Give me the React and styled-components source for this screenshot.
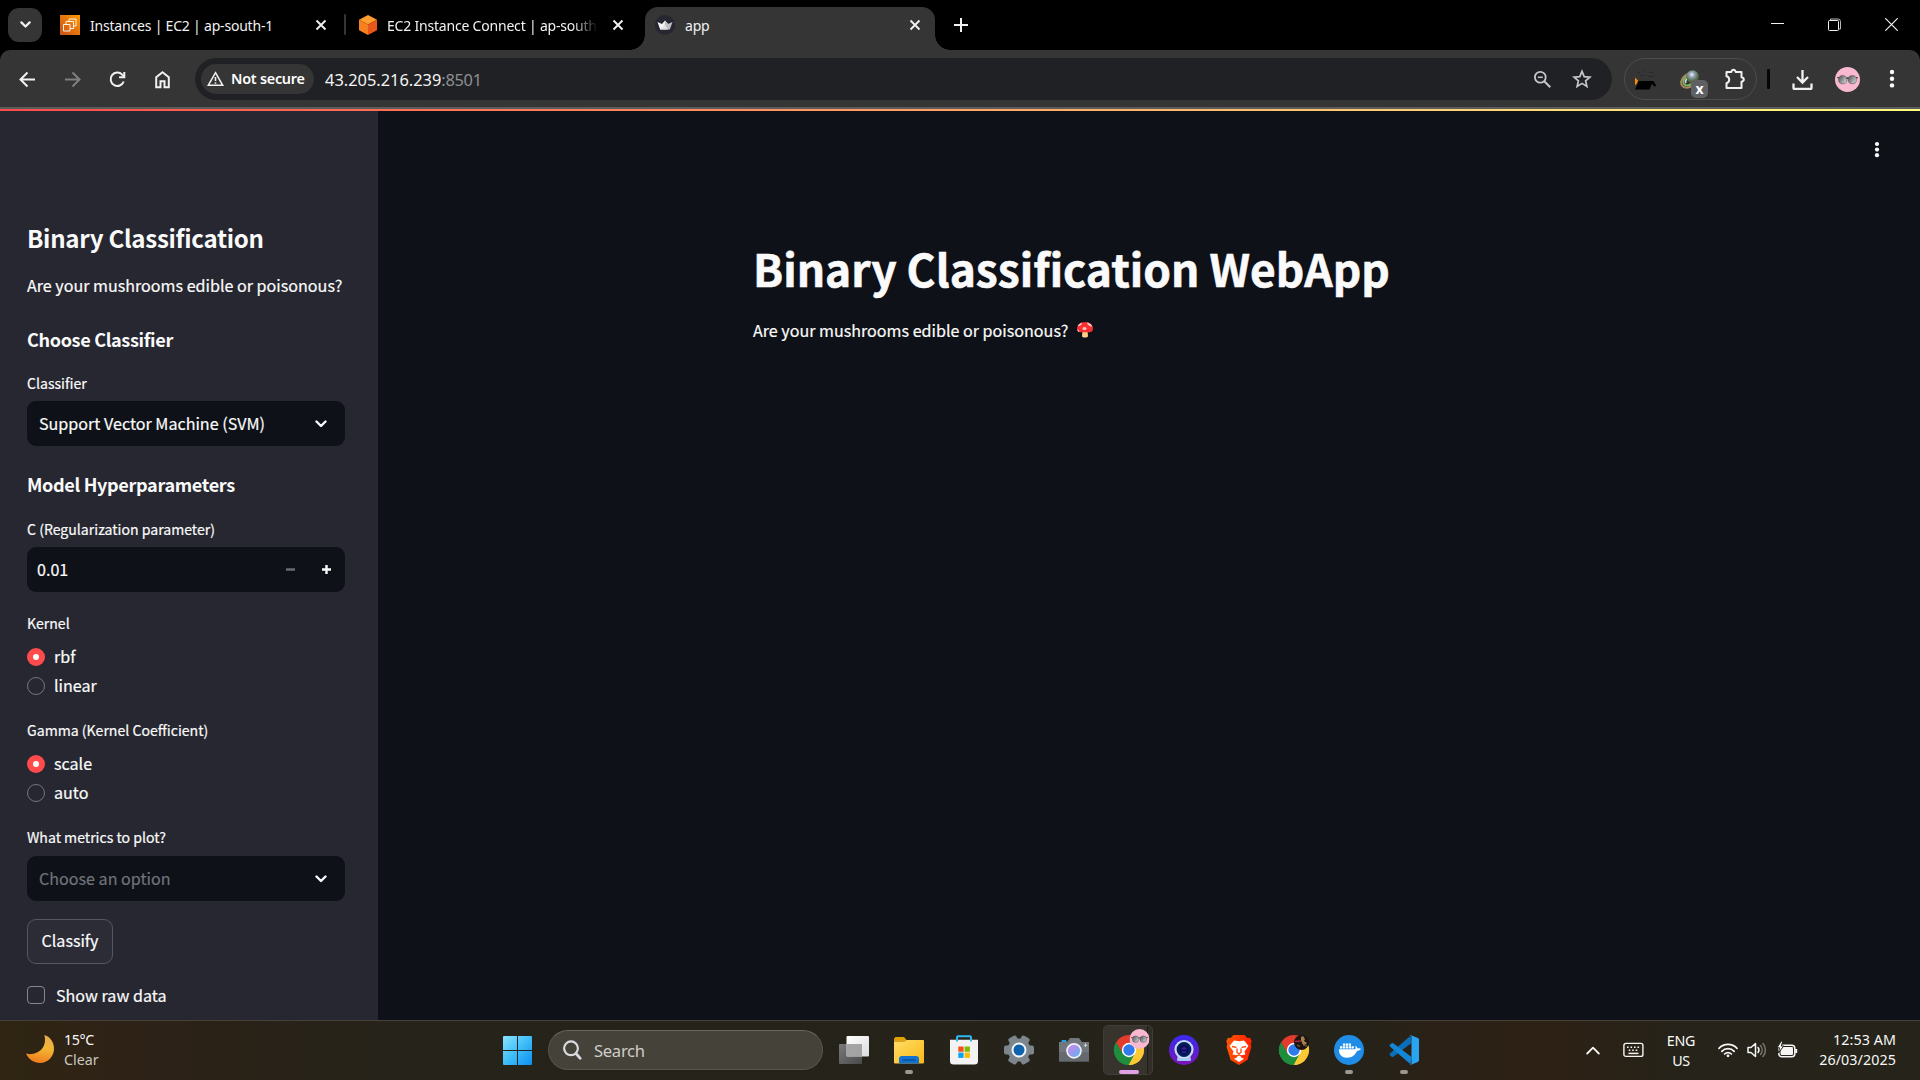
import React from "react";
import styled, { createGlobalStyle, css } from "styled-components";

const SOURCE = '"Noto Sans CJK SC", "Noto Sans", sans-serif';
const SEGOE = '"Noto Sans", "Open Sans", sans-serif';

const GlobalStyle = createGlobalStyle`
  *, *::before, *::after { box-sizing: border-box; }
  body { margin: 0; background: #000; overflow: hidden; }
  svg { display: block; flex: none; }
  h1, h2, h3, p { margin: 0; }
  button { font: inherit; color: inherit; border: 0; background: none; padding: 0; margin: 0; }
`;

const Screen = styled.div`
  width: 1920px;
  height: 1080px;
  display: flex;
  flex-direction: column;
  overflow: hidden;
  background: #000;
  color: #fafafa;
`;

/* ---------- browser chrome ---------- */

const TabStrip = styled.header`
  height: 50px;
  flex: none;
  display: flex;
  align-items: flex-start;
  background: #000;
  font-family: ${SEGOE};
`;

const TabSearch = styled.button`
  width: 34px;
  height: 34px;
  margin: 8px 0 0 8px;
  border-radius: 11px;
  background: #353535;
  display: grid;
  place-items: center;
`;

const Tab = styled.div`
  position: relative;
  display: flex;
  align-items: center;
  width: ${(p) => p.$w}px;
  height: 43px;
  margin-top: 7px;
  margin-left: ${(p) => p.$gap || 0}px;
  padding: 0 ${(p) => p.$pr || 0}px 7px ${(p) => p.$pl || 0}px;
  font-size: 14px;
  letter-spacing: -0.2px;
  color: #f1f1f1;
  ${(p) =>
    p.$active &&
    css`
      background: #353535;
      border-radius: 13px 13px 0 0;
      &::before, &::after {
        content: "";
        position: absolute;
        bottom: 0;
        width: 15px;
        height: 15px;
      }
      &::before {
        left: -15px;
        background: radial-gradient(circle at 0 0, transparent 14.5px, #353535 15px);
      }
      &::after {
        right: -15px;
        background: radial-gradient(circle at 100% 0, transparent 14.5px, #353535 15px);
      }
    `}
`;

const TabTitle = styled.span`
  flex: 1;
  min-width: 0;
  margin-left: 10px;
  overflow: hidden;
  white-space: nowrap;
  line-height: 20px;
  padding-top: 1px;
  ${(p) => p.$fade && "mask-image: linear-gradient(90deg, #000 185px, transparent 211px);"}
`;

const TabDivider = styled.i`
  width: 2px;
  height: 21px;
  margin: 14px 0 0 17px;
  background: #353535;
  border-radius: 1px;
`;

const NewTab = styled.button`
  margin: 18px 0 0 19px;
`;

const WindowControls = styled.div`
  margin-left: auto;
  display: flex;
  gap: 44px;
  padding: 18px 22px 0 0;
`;

const ToolbarBack = styled.div`
  height: 59px;
  flex: none;
  background: #000;
`;

const Toolbar = styled.nav`
  height: 59px;
  display: flex;
  align-items: center;
  padding: 1px 0 0;
  background: #353535;
  border-radius: 10px 10px 0 0;
  border-bottom: 2px solid #5c5c5c;
  font-family: ${SEGOE};
`;

const NavIcons = styled.div`
  display: flex;
  align-items: center;
  gap: 24px;
  padding-left: 17px;
  width: 195px;
`;

const Omnibox = styled.div`
  width: 1417px;
  height: 42px;
  border-radius: 21px;
  background: #202124;
  display: flex;
  align-items: center;
  padding: 0 20px 0 6px;
`;

const SecurityChip = styled.span`
  width: 113px;
  height: 30px;
  border-radius: 15px;
  background: #353535;
  display: flex;
  align-items: center;
  gap: 7px;
  padding: 0 0 1px 6px;
  font-size: 14.4px;
  font-weight: 600;
  letter-spacing: -0.25px;
  color: #fff;
  white-space: nowrap;
`;

const Url = styled.span`
  margin-left: 11px;
  flex: 1;
  font-size: 16.4px;
  letter-spacing: 0;
  color: #f4f4f4;
`;

const Port = styled.span`
  color: #8d9095;
  letter-spacing: -0.3px;
`;

const OmniActions = styled.div`
  display: flex;
  align-items: center;
  gap: 20px;
`;

const Extensions = styled.div`
  width: 133px;
  height: 42px;
  margin-left: 12px;
  border: 1px solid #4c4c4c;
  border-radius: 21px;
  display: flex;
  align-items: center;
  padding: 0 9px 0 10px;
`;

const GlobeSlot = styled.div`
  margin: 10px 16px 0 24px;
`;

const ToolDivider = styled.i`
  width: 3px;
  height: 20px;
  margin: 0 22px 0 10px;
  border-radius: 1px;
  background: #050505;
`;

const ToolEnd = styled.div`
  display: flex;
  align-items: center;
`;

const AvatarSlot = styled.div`
  margin: 0 29px 0 22px;
`;

/* ---------- web page ---------- */

const GradientBar = styled.div`
  height: 2px;
  flex: none;
  background: linear-gradient(90deg, #ff4b4b, #fffd80);
`;

const Page = styled.div`
  height: 909px;
  flex: none;
  display: flex;
  background: #0e1117;
  font-family: ${SOURCE};
  font-size: 16.1px;
  line-height: 24px;
  -webkit-text-stroke: 0.2px currentColor;
`;

const Sidebar = styled.aside`
  width: 378px;
  flex: none;
  background: #262730;
  padding: 111px 33px 0 27px;
`;

const SideTitle = styled.h2`
  font-size: 24.1px;
  font-weight: 600;
  letter-spacing: -0.29px;
  line-height: 32px;
  white-space: nowrap;
  -webkit-text-stroke: 0;
`;

const SideText = styled.p`
  margin-top: 19px;
  white-space: nowrap;
`;

const SubHead = styled.h3`
  margin-top: ${(p) => p.$mt}px;
  font-size: 18.1px;
  font-weight: 600;
  letter-spacing: -0.35px;
  line-height: 26px;
  -webkit-text-stroke: 0;
`;

const Label = styled.div`
  margin-top: ${(p) => p.$mt}px;
  font-size: 14.1px;
  line-height: 20px;
`;

const Field = styled.div`
  height: 45px;
  margin-top: ${(p) => p.$mt}px;
  padding: 0 ${(p) => p.$pr}px 0 ${(p) => p.$pl}px;
  display: flex;
  align-items: center;
  border-radius: 9px;
  background: #0e1117;
  color: ${(p) => (p.$muted ? "#71737a" : "#fafafa")};
`;

const FieldText = styled.span`
  flex: 1;
  padding-bottom: 2px;
`;

const FieldArrow = styled.span`
  padding-top: 1px;
`;

const Stepper = styled.button`
  width: 36px;
  height: 45px;
  display: grid;
  place-items: center;
  color: ${(p) => (p.$off ? "#6d6e7a" : "#fafafa")};
`;

const Radios = styled.div`
  margin-top: ${(p) => p.$mt}px;
  display: flex;
  flex-direction: column;
  gap: 11px;
`;

const Option = styled.label`
  height: 18px;
  margin-top: ${(p) => p.$mt || 0}px;
  display: flex;
  align-items: center;
  gap: ${(p) => p.$gap}px;
`;

const OptionText = styled.span`
  padding-bottom: ${(p) => p.$lift || 0}px;
`;

const RadioDot = styled.i`
  width: 18px;
  height: 18px;
  border-radius: 50%;
  display: grid;
  place-items: center;
  ${(p) =>
    p.$on
      ? css`
          background: #ff4b4b;
          &::after {
            content: "";
            width: 6px;
            height: 6px;
            border-radius: 50%;
            background: #fafafa;
          }
        `
      : css`
          border: 1px solid #74757c;
        `}
`;

const CheckSquare = styled.i`
  width: 18px;
  height: 18px;
  border: 1px solid #85868c;
  border-radius: 4px;
`;

const ClassifyButton = styled.button`
  display: block;
  width: 86px;
  height: 45px;
  margin-top: 18px;
  padding-bottom: 3px;
  border: 1px solid #55565f;
  border-radius: 9px;
  background: #2b2c36;
`;

const Main = styled.main`
  flex: 1;
  display: flex;
  flex-direction: column;
`;

const MainHeader = styled.div`
  height: 77px;
  display: flex;
  justify-content: flex-end;
  align-items: center;
  padding: 0 40px 0 0;
`;

const Content = styled.section`
  padding: 51px 0 0 375px;
`;

const PageTitle = styled.h1`
  font-size: 44.3px;
  font-weight: 700;
  line-height: 58px;
  white-space: nowrap;
  -webkit-text-stroke: 0.6px currentColor;
`;

const PageText = styled.p`
  margin-top: 21px;
  display: flex;
  align-items: center;
  gap: 9px;
`;

/* ---------- taskbar ---------- */

const Taskbar = styled.footer`
  height: 60px;
  flex: none;
  display: flex;
  align-items: stretch;
  border-top: 1px solid #45413a;
  background: linear-gradient(90deg, #2f2512 0, #2e2217 130px, #2b2217 200px, #25231a 420px, #242219 1350px, #2c2116 1440px, #2d2115 1560px, #25231a 1690px, #25231a 1920px);
  font-family: ${SEGOE};
  font-size: 14.3px;
  line-height: 20px;
  color: #f8f8f6;
`;

const Weather = styled.div`
  width: 503px;
  display: flex;
  align-items: flex-start;
  gap: 10px;
  padding: 9px 0 0 26px;
  svg { margin-top: 5px; }
`;

const Stack = styled.div`
  display: flex;
  flex-direction: column;
  align-items: ${(p) => p.$align || "flex-start"};
  letter-spacing: ${(p) => p.$ls || 0}px;
  white-space: nowrap;
`;

const Dim = styled.span`
  color: #c9c6c0;
  letter-spacing: 0;
`;

const SearchBox = styled.div`
  width: 275px;
  height: 40px;
  margin: 9px 3px 0 16px;
  border: 1px solid #57544c;
  border-top-color: #6b6860;
  border-radius: 20px;
  background: #45423a;
  display: flex;
  align-items: center;
  gap: 12px;
  padding-left: 14px;
  font-size: 16.6px;
  letter-spacing: -0.3px;
  color: #cfcdc8;
`;

const SearchText = styled.span`
  padding-top: 2px;
`;

const StartIcon = styled.div`
  padding-top: 15px;
`;

const AppSlot = styled.div`
  position: relative;
  width: 55px;
  display: grid;
  place-items: center;
  padding-bottom: 1px;
  ${(p) =>
    p.$mark &&
    css`
      &::after {
        content: "";
        position: absolute;
        left: calc(50% - ${p.$mark / 2}px);
        bottom: 6px;
        width: ${p.$mark}px;
        height: 4px;
        border-radius: 2px;
        background: ${p.$markColor || "#9a9893"};
      }
    `}
`;

const ActiveTile = styled.i`
  position: absolute;
  left: 2px;
  top: 4px;
  width: 50px;
  height: 50px;
  border: 1px solid #403d36;
  border-radius: 5px;
  background: linear-gradient(90deg, #37342d 43px, #1f1d17 43px, #1f1d17 44px, #302e26 44px);
`;

const SlotIcon = styled.div`
  position: relative;
`;

const Tray = styled.div`
  margin-left: auto;
  display: flex;
  align-items: flex-start;
  padding-right: 24px;
`;

const TrayIcon = styled.div`
  height: 58px;
  display: flex;
  align-items: center;
  margin-right: ${(p) => p.$mr}px;
`;

const TrayText = styled.div`
  padding-top: ${(p) => p.$pt}px;
  margin-right: ${(p) => p.$mr || 0}px;
`;

/* ---------- icons ---------- */

const stroke = { fill: "none", stroke: "currentColor", strokeLinecap: "round", strokeLinejoin: "round" };

const Svg = ({ w, h = w, vb, children, ...rest }) => (
  <svg width={w} height={h} viewBox={vb || `0 0 ${w} ${h}`} {...rest}>{children}</svg>
);

const CloseIcon = () => (
  <Svg w={12} stroke="#f1f1f1" strokeWidth="1.9"><path d="M1.5 1.5l9 9M10.5 1.5l-9 9" /></Svg>
);

const Chevron = ({ w = 12, sw = 2.4, color = "#fafafa" }) => (
  <Svg w={w} h={w * 0.67} vb="0 0 12 8" {...stroke} stroke={color} strokeWidth={sw}><path d="M1.5 1.5L6 6l4.5-4.5" /></Svg>
);

const EC2Icon = () => (
  <Svg w={20}>
    <defs><linearGradient id="ec2" x1="0" y1="1" x2="1" y2="0"><stop stopColor="#c8511b" /><stop offset="1" stopColor="#ff9900" /></linearGradient></defs>
    <path fill="url(#ec2)" d="M0 0h20v20H0z" />
    <g fill="none" stroke="#fff" strokeWidth="1" opacity=".9">
      <path d="M3.500 9.500h6.500v6.500H3.500z" />
      <path d="M6 9.500V6.500h7.500v7H10M9 6.500V4h7v7h-2.500" />
    </g>
  </Svg>
);

const HexIcon = () => (
  <Svg w={18} h={20}>
    <path fill="#ff9d2e" d="M9 0l9 4.800-9 4.700-9-4.700z" />
    <path fill="#f78020" d="M0 4.800l9 4.700V20l-9-4.800z" />
    <path fill="#e8561a" d="M18 4.800L9 9.500V20l9-4.800z" />
  </Svg>
);

const CrownIcon = () => (
  <Svg w={20}>
    <circle cx="10" cy="10" r="10" fill="#262730" />
    <path fill="#f5f5f5" d="M2.500 7l4.500 2 3-3.500L13 9l-2 5.500H5.200z" />
    <path fill="#bfbfc2" d="M10 5.500L13 9l4.500-2-2.700 7.500H9.500z" />
    <path fill="#e2e2e4" d="M5.200 14.500L10 9.500l3 5z" />
  </Svg>
);

const NavArrow = ({ flip, color }) => (
  <Svg w={21} stroke={color} strokeWidth="2" fill="none">
    <path d={flip ? "M3 10.500h14M10.500 3.500l7 7-7 7" : "M18 10.500H4M10.500 3.500l-7 7 7 7"} />
  </Svg>
);

const ReloadIcon = () => (
  <Svg w={21} stroke="#f1f1f1" strokeWidth="2" fill="none">
    <path d="M16.700 12.500a6.700 6.700 0 1 1-1.500-6.900l1.800 1.900" /><path d="M17.300 3v5.200h-5.200" />
  </Svg>
);

const HomeIcon = () => (
  <Svg w={21} stroke="#f1f1f1" strokeWidth="2" fill="none">
    <path d="M4.200 8.200v10h4.300v-6h4v6h4.300v-10L10.500 3.200z" />
  </Svg>
);

const WarningIcon = () => (
  <Svg w={17} h={16} stroke="#f1f1f1" fill="none">
    <path strokeWidth="1.500" d="M8.500 1.700L15.700 14.300H1.300z" /><path strokeWidth="1.600" d="M8.500 6v4M8.500 11.200v1.600" />
  </Svg>
);

const ZoomOutIcon = () => (
  <Svg w={19} stroke="#c4c6c9" fill="none">
    <circle cx="7.300" cy="7.300" r="5.400" strokeWidth="1.800" /><path strokeWidth="2" d="M11.300 11.300l6 6" /><path strokeWidth="1.500" d="M4.800 7.300h5" />
  </Svg>
);

const StarIcon = () => (
  <Svg w={20} stroke="#c4c6c9" strokeWidth="1.700" fill="none">
    <path d="M10 2.300l2.200 5.300 5.700.5-4.300 3.700 1.300 5.600L10 14.400l-4.900 3 1.300-5.600L2.100 8.100l5.700-.5z" />
  </Svg>
);

const DarkExtension = () => (
  <Svg w={21} h={22}>
    <g fill="#2a2a2a"><path d="M2 4h3v1H2zM8 2h2v1H8zM14 4h4v1h-4zM5 7h5v1H5zM13 8h6v1h-6z" /></g>
    <path fill="#000" d="M4 13h14.500l3 5-2.500.5-2-3-2.500 6L0 21.500z" />
    <path fill="#ff8c00" d="M0 9.500l3 3-1.500 3.500L0 17z" />
  </Svg>
);

const GlobeExtension = () => (
  <Svg w={28} h={28}>
    <defs><radialGradient id="globe" cx=".45" cy=".35"><stop stopColor="#eef3f7" /><stop offset=".45" stopColor="#8f9fb0" /><stop offset="1" stopColor="#536b45" /></radialGradient></defs>
    <path d="M10 3C2 6 0 12 2 15.500c2 3 7 2.500 9.500.5" fill="none" stroke="#a58b62" strokeWidth="2" />
    <path d="M8 6c-4.500 2-5.500 6-4 8s5 2 8-.5" fill="none" stroke="#7fb35c" strokeWidth="2" />
    <path d="M8 8c-2.500 2-3 3.500-2 5" fill="none" stroke="#d5e3ef" strokeWidth="1.500" />
    <circle cx="12.500" cy="6.500" r="6.300" fill="url(#globe)" />
    <rect x="11" y="10" width="17" height="18" rx="5" fill="#5f6063" />
    <text x="19.500" y="24" textAnchor="middle" fontFamily="Noto Sans" fontWeight="700" fontSize="14" fill="#fff">x</text>
  </Svg>
);

const PuzzleIcon = () => (
  <Svg w={22} stroke="#f1f1f1" strokeWidth="2" fill="none" strokeLinejoin="round">
    <path d="M2.500 4h4.800c.4-1.500 1-2.200 2.200-2.200S11.300 2.500 11.700 4h5.800v5.300c1.500.3 2.300 1 2.300 2.200s-.8 1.900-2.300 2.200V20h-15v-4.800c1.700-.5 2.700-1.700 2.700-3.500s-1-3-2.700-3.400z" />
  </Svg>
);

const DownloadIcon = () => (
  <Svg w={21} stroke="#f1f1f1" strokeWidth="2.300" fill="none">
    <path d="M10.500 1v12M5 8l5.500 5.500L16 8" /><path strokeLinejoin="round" d="M1.500 14.500V19a1.200 1.200 0 0 0 1.200 1h15.600a1.200 1.200 0 0 0 1.200-1v-4.500" />
  </Svg>
);

const Avatar = ({ w }) => (
  <Svg w={w} vb="0 0 25 25">
    <defs><linearGradient id="lens" x2="1" y2=".6"><stop stopColor="#4a4c4f" /><stop offset="1" stopColor="#c6cbcf" /></linearGradient></defs>
    <circle cx="12.500" cy="12.500" r="12.500" fill="#f8b8d0" />
    <g fill="url(#lens)" stroke="#5a5053" strokeWidth=".6"><circle cx="7.700" cy="12.700" r="4.100" /><circle cx="17.300" cy="12.700" r="4.100" /></g>
    <path d="M2.300 10.700h1.500M11.500 11.500q1-1 2 0M21.200 10.700h1.500" stroke="#333" strokeWidth="1.200" fill="none" />
  </Svg>
);

const Dots = ({ r, gap }) => (
  <Svg w={6} h={gap * 2 + 6} fill="#fafafa">
    <circle cx="3" cy="3" r={r} /><circle cx="3" cy={3 + gap} r={r} /><circle cx="3" cy={3 + gap * 2} r={r} />
  </Svg>
);

const Mushroom = () => (
  <Svg w={16} h={16} vb="0 0 16 19.500" preserveAspectRatio="none">
    <path fill="#ffcf85" d="M5.500 11h5l.5 6c0 2.700-6 2.700-6 0z" />
    <path fill="#f92f32" d="M8 0c5 0 8 4 8 8 0 3.500-2 4.500-3.500 4.500h-9C2 12.500 0 11.500 0 8c0-4 3-8 8-8z" />
    <g fill="#fbc5bd"><circle cx="7.500" cy="8" r="2" /><path d="M10 .5c2.500.5 4.500 2.300 5.300 5-2.300.3-5.300-2.200-5.300-5zM5 .8C3 1.500 1.400 3 .7 5 3 5 5.200 3 5 .8zM.2 9c1.500.3 2.500 1.700 2 3.200C1 11.700.2 10.500.2 9z" /></g>
  </Svg>
);

const Moon = () => (
  <Svg w={28}>
    <defs><linearGradient id="moon" x1=".6" x2=".4" y2="1"><stop stopColor="#e6ac4e" /><stop offset=".45" stopColor="#f2b632" /><stop offset="1" stopColor="#ef7a1d" /></linearGradient></defs>
    <path fill="url(#moon)" d="M18.300 0C24 1.500 28 7 28 13.500 28 21.500 22 28 14 28 8 28 2.500 24.500 0 18.300c2 .8 4 1 6 .7 7-1 13-6 13-14 0-1.800-.2-3.500-.7-5z" />
  </Svg>
);

const WindowsLogo = () => (
  <Svg w={29}>
    <defs><linearGradient id="win" x2="1" y2="1"><stop stopColor="#8ae4fd" /><stop offset=".5" stopColor="#3fbdf9" /><stop offset="1" stopColor="#0c8ff0" /></linearGradient></defs>
    <path fill="url(#win)" d="M1 0h13v14H0V1a1 1 0 0 1 1-1zM15 0h13a1 1 0 0 1 1 1v13H15zM0 15h14v14H1a1 1 0 0 1-1-1zM15 15h14v13a1 1 0 0 1-1 1H15z" />
  </Svg>
);

const SearchIcon = () => (
  <Svg w={19} h={20} stroke="#d9dadf" fill="none"><circle cx="8" cy="8.300" r="6.900" strokeWidth="2.200" /><path d="M13 13.500l4.200 4.800" strokeWidth="2.800" strokeLinecap="round" /></Svg>
);

const TaskView = () => (
  <Svg w={30}>
    <defs><linearGradient id="tvw" x2="1" y2="1"><stop stopColor="#fff" /><stop offset="1" stopColor="#dcdcdc" /></linearGradient><linearGradient id="tvd" x2="1" y2="1"><stop stopColor="#7a7a7a" /><stop offset="1" stopColor="#4a4a4a" /></linearGradient></defs>
    <rect y="9" width="23" height="20" rx="1" fill="url(#tvd)" /><rect x="7.500" y="1" width="22.500" height="20.500" rx="1" fill="url(#tvw)" /><path d="M7.500 9H23v12.500H7.500z" fill="#9b9b9b" opacity=".9" />
  </Svg>
);

const Folder = () => (
  <Svg w={30}>
    <defs><linearGradient id="fld" x2="1" y2="1"><stop stopColor="#ffdd66" /><stop offset="1" stopColor="#fbb917" /></linearGradient></defs>
    <path fill="#e0a100" d="M1.500 2h8.500l3 3.500V9H0V3.500z" /><rect y="5" width="30" height="23.500" rx="1" fill="url(#fld)" /><path fill="#dea31a" d="M0 5h13l-2.500 2H0z" />
    <path fill="#1173cf" d="M5 28.500V24a3 3 0 0 1 3-3h14a3 3 0 0 1 3 3v4.500z" /><path d="M8.500 25h13" stroke="#0a4f9b" strokeWidth="1.500" />
  </Svg>
);

const Store = () => (
  <Svg w={30}>
    <path d="M8 6V2.200a1 1 0 0 1 1-1h12a1 1 0 0 1 1 1V6" fill="none" stroke="#2eb8ef" strokeWidth="2" />
    <path fill="#f3f3f3" d="M1 4.700h28V26a3.500 3.500 0 0 1-3.500 3.500h-21A3.500 3.500 0 0 1 1 26z" /><path d="M8 4v2.500M22 4v2.500" stroke="#2eb8ef" strokeWidth="2" />
    <path fill="#f1511b" d="M9.300 11.500h5.300v5.300H9.300z" /><path fill="#80bb03" d="M15.600 11.500h5.300v5.300h-5.300z" /><path fill="#06a4ef" d="M9.300 17.600h5.300v5.300H9.300z" /><path fill="#feba09" d="M15.600 17.600h5.300v5.300h-5.300z" />
  </Svg>
);

const Gear = () => (
  <Svg w={30}>
    <g fill="#7d858d">{[0, 60, 120].map((a) => <rect key={a} x="10.500" y="0" width="9" height="30" rx="2" transform={`rotate(${a + 30} 15 15)`} />)}<circle cx="15" cy="15" r="11.500" /></g>
    <circle cx="15" cy="15" r="6.500" fill="#0f62ac" stroke="#f2f5f8" strokeWidth="2" />
  </Svg>
);

const Camera = () => (
  <Svg w={30}>
    <defs><linearGradient id="cam" x2="1" y2="1"><stop stopColor="#d68be0" /><stop offset=".5" stopColor="#9c96ee" /><stop offset="1" stopColor="#52bdf3" /></linearGradient></defs>
    <path fill="#229fe0" d="M2 7l1-2h4l1 2z" /><path fill="#71777d" d="M0 7h8l3-4h9l3 4h7v19.500H0z" /><path fill="#5d6369" d="M0 17h30v9.500H0z" opacity=".6" />
    <circle cx="15" cy="15.800" r="7" fill="url(#cam)" stroke="#eef0f4" strokeWidth="1.700" /><path d="M26.500 8.500v3.500M24.800 10.200h3.500" stroke="#d5d8db" />
  </Svg>
);

const Chrome = ({ children }) => (
  <Svg w={30} overflow="visible">
    <path fill="#e33b2e" d="M15 15L2 7.500a15 15 0 0 1 26 0z" />
    <path fill="#fcc934" d="M15 15L28 7.500A15 15 0 0 1 15 30z" />
    <path fill="#1e8e3e" d="M15 30A15 15 0 0 1 2 7.500L9 18.500z" />
    <path fill="#e33b2e" d="M2 7.500L8.700 18.500 15 8h13.200l-.2-.5z" />
    <path fill="#1e8e3e" d="M2 7.500l6.700 11.200L15 22l6-3.500L15 30A15 15 0 0 1 2 7.500z" />
    <path fill="#fcc934" d="M28 8H15l6.200 10.500L14.700 30A15 15 0 0 0 28 8z" />
    <circle cx="15" cy="15" r="7.200" fill="#fff" /><circle cx="15" cy="15" r="5.700" fill="#2f7bec" />
    {children}
  </Svg>
);

const WebcamIcon = () => (
  <Svg w={30}>
    <defs><linearGradient id="wbc" x2="0" y2="1"><stop stopColor="#3a2bf0" /><stop offset="1" stopColor="#7a14b8" /></linearGradient></defs>
    <circle cx="15" cy="15" r="15" fill="url(#wbc)" /><path fill="#a5c7f5" d="M9 20h12l1 4.500a1.500 1.500 0 0 1-1.500 1.500h-11A1.500 1.500 0 0 1 8 24.500z" />
    <circle cx="15" cy="14.500" r="8.500" fill="#081a5e" stroke="#c3dcfa" strokeWidth="2.200" /><circle cx="15" cy="14.500" r="4.500" fill="#0d0a50" /><path d="M12.500 14.500a2.500 2.500 0 0 1 5 0z" fill="#2a22a8" /><path d="M13 17h4" stroke="#3a37d6" />
  </Svg>
);

const Brave = () => (
  <Svg w={30}>
    <defs><linearGradient id="brv" x2="1" y2="0"><stop stopColor="#ff5601" /><stop offset="1" stopColor="#ff1f00" /></linearGradient></defs>
    <path fill="url(#brv)" d="M9.500 0h11l2.800 3 2.700-.3L27.700 6l-.9 3 .6 3-4 13-8.400 5-8.400-5-4-13 .6-3-.9-3L4 2.700 6.700 3z" />
    <path fill="#fff" d="M10 5.500l5 .8 5-.8 4.500 5.500-4 5.500 1 3-3 .5-2 1.500.6 1 2.900 1.300L15 27l-5-3.200 2.900-1.300.6-1-2-1.500-3-.5 1-3-4-5.500z" />
    <path d="M8 11.500l4.500.8M22 11.500l-4.500.8M13 13.500v4l2 1.200 2-1.200v-4M11 21.500l4-1.500 4 1.500" stroke="#ff4200" strokeWidth="1.300" fill="none" />
  </Svg>
);

const Docker = () => (
  <Svg w={30}>
    <circle cx="15" cy="15" r="15" fill="#1f8de8" />
    <path fill="#fff" d="M5 14.300h16c.8-1 .7-2.500.2-3.600 1.300.7 2 1.600 2.200 2.600 1.500-.3 2.800-.1 3.600.5-.8 1.500-2.200 2-4 2C21.500 20 18 22.800 13 22.800c-5 0-8.300-3-8-8.500z" />
    <g fill="#fff"><path d="M6 11.300h2.300v2.300H6zM8.900 11.300h2.300v2.300H8.900zM11.800 11.300h2.300v2.300h-2.300zM14.700 11.300H17v2.300h-2.300zM17.500 11.300h2.300v2.300h-2.300zM11.800 8.500h2.300v2.300h-2.300zM8.900 8.500h2.300v2.300H8.900zM14.700 8.500H17v2.300h-2.300z" /></g>
  </Svg>
);

const VSCode = () => (
  <Svg w={30}>
    <path fill="#0a6fb8" d="M1.200 18.300L21.500.8 22.500 8 4.300 21.800a1.500 1.500 0 0 1-1.700 0l-1.400-1.200a1.500 1.500 0 0 1 0-2.300z" />
    <path fill="#1287d6" d="M1.200 11.700L21.500 29.200l1-7.200L4.300 8.200a1.500 1.500 0 0 0-1.700 0L1.200 9.400a1.500 1.500 0 0 0 0 2.300z" />
    <path fill="#2aa4f1" d="M22 .2l6.800 2.900c.8.3 1.200 1 1.200 1.700v20.400c0 .8-.4 1.400-1.200 1.700L22 29.800c-.7.300-1.200 0-1.700-.5.700.7 2.200.2 2.200-1V1.700c0-1.200-1.500-1.700-2.200-1C20.800.200 21.300-.100 22 .2z" />
  </Svg>
);

const Keyboard = () => (
  <Svg w={21} h={16} fill="none" stroke="#f5f5f3"><rect x=".9" y="1.400" width="19" height="13" rx="2" strokeWidth="1.400" /><path strokeWidth="1.600" strokeDasharray="1.600 1.900" d="M4 5.200h13.500M5.700 8.200h10.500" /><path strokeWidth="1.500" d="M5.500 11.400h10" /></Svg>
);

const Wifi = () => (
  <Svg w={20} h={16} {...stroke} stroke="#f5f5f3" strokeWidth="1.700"><path d="M1 6.300a12.500 12.500 0 0 1 18 0M3.800 9.300a8.600 8.600 0 0 1 12.400 0M6.600 12a4.800 4.800 0 0 1 6.800 0" /><circle cx="10" cy="13.800" r="1.400" fill="#f5f5f3" stroke="none" /></Svg>
);

const Volume = () => (
  <Svg w={21} h={18} {...stroke} stroke="#f5f5f3" strokeWidth="1.500"><path d="M1 6.500h3L8.500 2.500v13L4 11.500H1z" /><path d="M11 6.500a4 4 0 0 1 0 5" /><path stroke="#77756f" d="M13.500 4.500a7 7 0 0 1 0 9M16 2.500a10 10 0 0 1 0 13" /></Svg>
);

const Battery = () => (
  <Svg w={21} h={18}>
    <rect x="1.800" y="4.200" width="16" height="11.600" rx="3" fill="none" stroke="#f5f5f3" strokeWidth="1.500" />
    <rect x="3.600" y="6" width="12.400" height="8" rx="1.200" fill="#f5f5f3" />
    <path d="M19.200 8v4" stroke="#f5f5f3" strokeWidth="2" />
    <path fill="#f5f5f3" stroke="#25231a" strokeWidth="1" d="M4.200 0L0 6.800h2.500L1.300 12l5.500-7H4.300L5.700.5z" />
  </Svg>
);

/* ---------- composition ---------- */

const RadioGroup = ({ options, mt }) => (
  <Radios $mt={mt}>
    {options.map((name, i) => (
      <Option key={name} $gap={9}>
        <RadioDot $on={i === 0} />
        <OptionText $lift={2}>{name}</OptionText>
      </Option>
    ))}
  </Radios>
);

const Browser = () => (
  <>
    <TabStrip>
      <TabSearch><Chevron w={11} color="#f1f1f1" /></TabSearch>
      <Tab $w={275} $gap={10} $pl={8}><EC2Icon /><TabTitle>Instances | EC2 | ap-south-1</TabTitle><CloseIcon /></Tab>
      <TabDivider />
      <Tab $w={273} $gap={5} $pl={8}><HexIcon /><TabTitle $fade>EC2 Instance Connect | ap-south</TabTitle><CloseIcon /></Tab>
      <Tab $active $w={290} $gap={21} $pl={10} $pr={14}><CrownIcon /><TabTitle>app</TabTitle><CloseIcon /></Tab>
      <NewTab><Svg w={14} stroke="#f1f1f1" strokeWidth="2"><path d="M7 0v14M0 7h14" /></Svg></NewTab>
      <WindowControls>
        <Svg w={13} h={13} stroke="#f1f1f1"><path d="M0 5.500h13" /></Svg>
        <Svg w={13} h={13} stroke="#f1f1f1" fill="none"><path d="M2.500 2.500V1h7.500a2.500 2.500 0 0 1 2.500 2.500V11H11" stroke="#bbb" /><rect x=".5" y="2.500" width="10" height="10" rx="1" /></Svg>
        <Svg w={13} h={13} stroke="#f1f1f1" strokeWidth="1.200"><path d="M.3.300l12.400 12.400M12.700.300L.3 12.700" /></Svg>
      </WindowControls>
    </TabStrip>
    <ToolbarBack>
      <Toolbar>
        <NavIcons><NavArrow color="#f1f1f1" /><NavArrow flip color="#7f7f7f" /><ReloadIcon /><HomeIcon /></NavIcons>
        <Omnibox>
          <SecurityChip><WarningIcon />Not secure</SecurityChip>
          <Url>43.205.216.239<Port>:8501</Port></Url>
          <OmniActions><ZoomOutIcon /><StarIcon /></OmniActions>
        </Omnibox>
        <Extensions><DarkExtension /><GlobeSlot><GlobeExtension /></GlobeSlot><PuzzleIcon /></Extensions>
        <ToolDivider />
        <ToolEnd>
          <DownloadIcon />
          <AvatarSlot><Avatar w={25} /></AvatarSlot>
          <Dots r={2.2} gap={6.7} />
        </ToolEnd>
      </Toolbar>
    </ToolbarBack>
  </>
);

const SidePanel = () => (
  <Sidebar>
    <SideTitle>Binary Classification</SideTitle>
    <SideText>Are your mushrooms edible or poisonous?</SideText>
    <SubHead $mt={29}>Choose Classifier</SubHead>
    <Label $mt={21}>Classifier</Label>
    <Field $mt={8} $pl={12} $pr={18}><FieldText>Support Vector Machine (SVM)</FieldText><FieldArrow><Chevron /></FieldArrow></Field>
    <SubHead $mt={25}>Model Hyperparameters</SubHead>
    <Label $mt={22}>C (Regularization parameter)</Label>
    <Field $mt={8} $pl={10} $pr={1}>
      <FieldText>0.01</FieldText>
      <Stepper $off><Svg w={9} h={9} stroke="currentColor" strokeWidth="2.400"><path d="M0 4.500h9" /></Svg></Stepper>
      <Stepper><Svg w={9} h={9} stroke="currentColor" strokeWidth="2.400"><path d="M0 4.500h9M4.500 0v9" /></Svg></Stepper>
    </Field>
    <Label $mt={21}>Kernel</Label>
    <RadioGroup mt={15} options={["rbf", "linear"]} />
    <Label $mt={25}>Gamma (Kernel Coefficient)</Label>
    <RadioGroup mt={15} options={["scale", "auto"]} />
    <Label $mt={25}>What metrics to plot?</Label>
    <Field $mt={9} $pl={12} $pr={18} $muted><FieldText>Choose an option</FieldText><FieldArrow><Chevron /></FieldArrow></Field>
    <ClassifyButton>Classify</ClassifyButton>
    <Option $mt={22} $gap={11}><CheckSquare /><OptionText>Show raw data</OptionText></Option>
  </Sidebar>
);

export default function App() {
  return (
    <Screen>
      <GlobalStyle />
      <Browser />
      <GradientBar />
      <Page>
        <SidePanel />
        <Main>
          <MainHeader><Dots r={2.1} gap={5.6} /></MainHeader>
          <Content>
            <PageTitle>Binary Classification WebApp</PageTitle>
            <PageText>Are your mushrooms edible or poisonous? <Mushroom /></PageText>
          </Content>
        </Main>
      </Page>
      <Taskbar>
        <Weather><Moon /><Stack $ls={-0.4}><span>15°C</span><Dim>Clear</Dim></Stack></Weather>
        <StartIcon><WindowsLogo /></StartIcon>
        <SearchBox><SearchIcon /><SearchText>Search</SearchText></SearchBox>
        <AppSlot><TaskView /></AppSlot>
        <AppSlot $mark={8}><Folder /></AppSlot>
        <AppSlot><Store /></AppSlot>
        <AppSlot><Gear /></AppSlot>
        <AppSlot><Camera /></AppSlot>
        <AppSlot $mark={20} $markColor="#dfa0e6">
          <ActiveTile />
          <SlotIcon>
            <Chrome>
              <g transform="translate(15.500 -6)"><Avatar w={20} /></g>
            </Chrome>
          </SlotIcon>
        </AppSlot>
        <AppSlot><WebcamIcon /></AppSlot>
        <AppSlot><Brave /></AppSlot>
        <AppSlot>
          <Chrome>
            <circle cx="22.500" cy="7.500" r="7.500" fill="#1c1410" />
            <path d="M22 2l2-1 2 3-1 2 3 2-3 3-2-3-1-3z" fill="#a8814f" /><path d="M16 6.500l6-.5" stroke="#b0203a" strokeWidth="1.500" /><path d="M18 10l3 1.500M25 10l3 1" fill="none" stroke="#6b4a2c" strokeWidth="1.500" />
          </Chrome>
        </AppSlot>
        <AppSlot $mark={8}><Docker /></AppSlot>
        <AppSlot $mark={8}><VSCode /></AppSlot>
        <Tray>
          <TrayIcon $mr={23}><Svg w={14} h={9} {...stroke} stroke="#f5f5f3" strokeWidth="1.800"><path d="M1.200 7.500L7 1.700l5.800 5.800" /></Svg></TrayIcon>
          <TrayIcon $mr={23}><Keyboard /></TrayIcon>
          <TrayText $pt={10} $mr={23}><Stack $align="center" $ls={-0.3}><span>ENG</span><span>US</span></Stack></TrayText>
          <TrayIcon $mr={9}><Wifi /></TrayIcon>
          <TrayIcon $mr={9}><Volume /></TrayIcon>
          <TrayIcon $mr={21}><Battery /></TrayIcon>
          <TrayText $pt={9}><Stack $align="flex-end" $ls={0.08}><span>12:53 AM</span><span>26/03/2025</span></Stack></TrayText>
        </Tray>
      </Taskbar>
    </Screen>
  );
}
